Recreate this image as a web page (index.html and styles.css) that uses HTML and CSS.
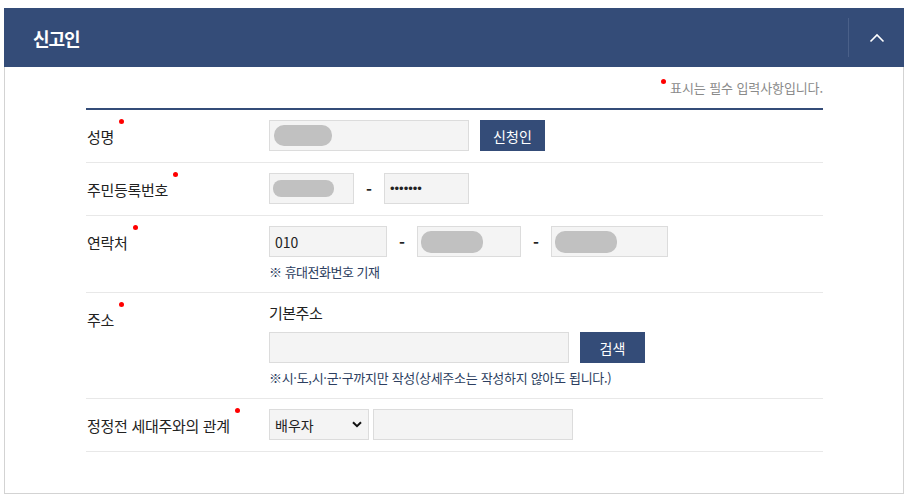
FILE: index.html
```html
<!DOCTYPE html>
<html lang="ko">
<head>
<meta charset="utf-8">
<title>신고인</title>
<link rel="stylesheet" href="styles.css">
</head>
<body>
<section class="panel">
  <header class="panel-head">
    <h2 class="panel-title">신고인</h2>
    <button class="toggle" type="button" aria-label="접기">
      <svg width="16" height="10" viewBox="0 0 16 10"><path d="M1.5 8.5 L8 2 L14.5 8.5" fill="none" stroke="#fff" stroke-width="1.6"/></svg>
    </button>
  </header>
  <div class="panel-body">
    <p class="req-note"><span class="dot"></span>표시는 필수 입력사항입니다.</p>
    <div class="form">
      <div class="row">
        <div class="label"><span class="req">성명</span></div>
        <div class="fields">
          <div class="line">
            <div class="field w200"><span class="blob b-name"></span></div>
            <button class="btn" type="button">신청인</button>
          </div>
        </div>
      </div>
      <div class="row">
        <div class="label"><span class="req">주민등록번호</span></div>
        <div class="fields">
          <div class="line">
            <div class="field w85"><span class="blob b-jumin"></span></div>
            <span class="dash">-</span>
            <div class="field w85 pw">•••••••</div>
          </div>
        </div>
      </div>
      <div class="row">
        <div class="label"><span class="req">연락처</span></div>
        <div class="fields">
          <div class="line">
            <div class="field w118">010</div>
            <span class="dash">-</span>
            <div class="field w104"><span class="blob b-phone"></span></div>
            <span class="dash">-</span>
            <div class="field w117"><span class="blob b-phone"></span></div>
          </div>
          <p class="hint">※ 휴대전화번호 기재</p>
        </div>
      </div>
      <div class="row">
        <div class="label"><span class="req">주소</span></div>
        <div class="fields">
          <p class="sub">기본주소</p>
          <div class="line">
            <div class="field w300"></div>
            <button class="btn" type="button">검색</button>
          </div>
          <p class="hint long">※시·도,시·군·구까지만 작성(상세주소는 작성하지 않아도 됩니다.)</p>
        </div>
      </div>
      <div class="row">
        <div class="label"><span class="req">정정전 세대주와의 관계</span></div>
        <div class="fields">
          <div class="line tight">
            <div class="field select w100">
              <span>배우자</span>
              <svg width="10" height="7" viewBox="0 0 10 7"><path d="M1 1.2 L5 5.2 L9 1.2" fill="none" stroke="#111" stroke-width="2"/></svg>
            </div>
            <div class="field w200"></div>
          </div>
        </div>
      </div>
    </div>
  </div>
</section>
</body>
</html>
```
FILE: styles.css
```css
* { box-sizing: border-box; }
body {
  margin: 0;
  padding: 8px 10px 0 4px;
  background: #fff;
  font-family: "Noto Sans CJK KR", "Noto Sans", sans-serif;
  color: #333;
}
.panel { width: 900px; }
.panel-head {
  height: 59px;
  background: #344c78;
  display: flex;
  align-items: center;
  padding-left: 29px;
}
.panel-title {
  margin: 0;
  flex: 1;
  color: #fff;
  font-size: 18px;
  font-weight: 700;
  letter-spacing: -1px;
  line-height: 24px;
}
.toggle {
  width: 56px;
  height: 39px;
  border: 0;
  border-left: 1px solid #4a6089;
  background: transparent;
  padding: 0;
  display: flex;
  align-items: center;
  justify-content: center;
  cursor: pointer;
}
.panel-body {
  border: 1px solid #d3d3d3;
  border-top: 0;
  padding: 0 80px 41px 81px;
}
.req-note {
  margin: 0;
  padding-top: 12px;
  padding-bottom: 11px;
  text-align: right;
  font-size: 13px;
  line-height: 18px;
  color: #8a8a8a;
  letter-spacing: -0.1px;
}
.req-note .dot {
  display: inline-block;
  width: 5px;
  height: 5px;
  border-radius: 50%;
  background: #f00;
  vertical-align: top;
  margin-top: 0px;
  margin-right: 4px;
}
.form { border-top: 2px solid #344c78; }
.row {
  display: flex;
  padding: 10px 0 11px;
  border-bottom: 1px solid #e8e8e8;
}
.label {
  width: 183px;
  flex: none;
  padding-left: 1px;
  padding-top: 7px;
  font-size: 15px;
  line-height: 20px;
  letter-spacing: -0.3px;
  color: #222;
}
.req { position: relative; }
.req::after {
  content: "";
  position: absolute;
  right: -10px;
  top: -7px;
  width: 5px;
  height: 5px;
  border-radius: 50%;
  background: #f00;
}
.fields { display: flex; flex-direction: column; }
.line { display: flex; align-items: center; gap: 11px; }
.line.tight { gap: 4px; }
.field {
  height: 31px;
  background: #f4f4f4;
  border: 1px solid #dcdcdc;
  display: flex;
  align-items: center;
  padding: 0 5px;
  font-size: 14px;
  color: #222;
}
.w85 { width: 85px; }
.w100 { width: 100px; }
.w104 { width: 104px; }
.w117 { width: 117px; }
.w118 { width: 118px; }
.w200 { width: 200px; }
.w300 { width: 300px; }
.pw {
  font-family: "Liberation Sans", sans-serif;
  font-size: 13px;
  letter-spacing: 0;
  padding-left: 5px;
  color: #222;
}
.blob {
  display: block;
  background: #c1c1c1;
  border-radius: 10px;
}
.b-name { width: 58px; height: 21px; margin-left: -1px; }
.b-jumin { width: 61px; height: 17px; border-radius: 8px; margin-left: -2px; }
.b-phone { width: 62px; height: 22px; margin-left: -2px; }
.dash {
  width: 8px;
  text-align: center;
  font-weight: 700;
  font-size: 16px;
  color: #222;
}
.btn {
  width: 65px;
  height: 31px;
  border: 0;
  background: #344c78;
  color: #fff;
  font-family: inherit;
  font-size: 14px;
  letter-spacing: 0.2px;
  padding: 0;
}
.hint {
  margin: 6px 0 0;
  font-size: 13px;
  line-height: 18px;
  letter-spacing: -0.5px;
  color: #2c3e60;
}
.hint.long { letter-spacing: -0.3px; }
.sub {
  margin: 0 0 9px;
  font-size: 15px;
  line-height: 20px;
  letter-spacing: -0.5px;
  color: #222;
}
.select { justify-content: space-between; padding: 0 6px 0 5px; }
```
